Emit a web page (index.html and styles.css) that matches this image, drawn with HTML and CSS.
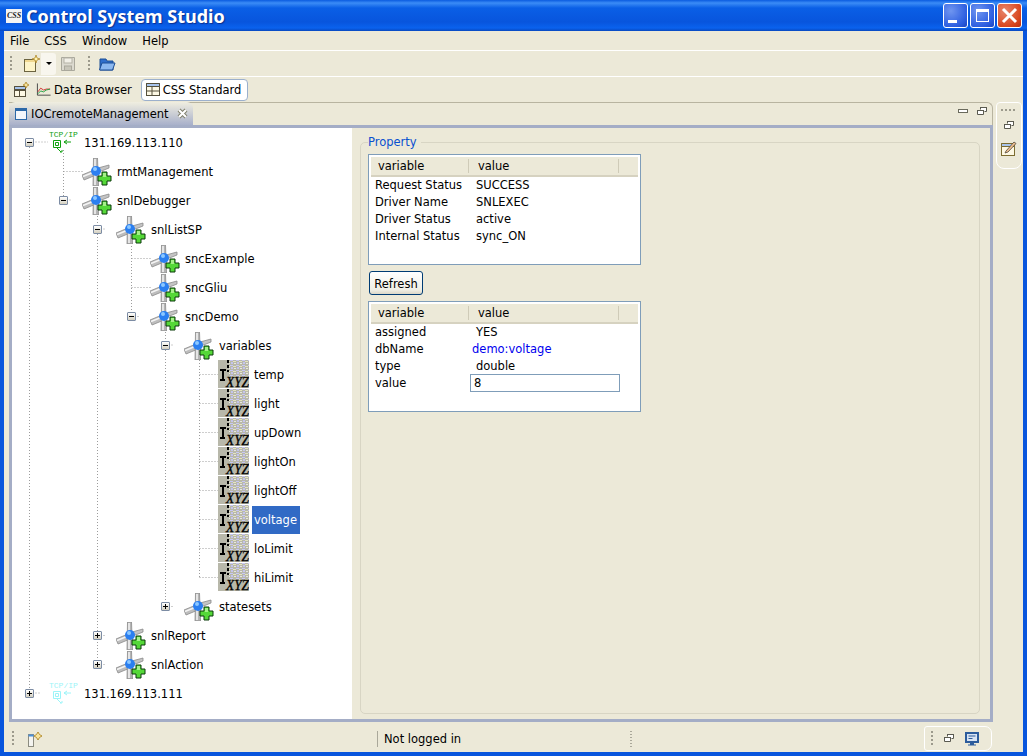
FILE: index.html
```html
<!DOCTYPE html>
<html>
<head>
    <title>Control System Studio</title>
    <link rel="stylesheet" href="styles.css">
</head>
<body>
    <svg class="defs" width="0" height="0">
        <defs>
            <symbol id="gear" viewBox="0 0 32 28">
                <path d="M0 17 L12 12 L14 17 L2 22 z" fill="#bdbdbd" stroke="#8a8a8a" stroke-width=".8"/>
                <path d="M1 18.500 L12 14" stroke="#f4f4f4" stroke-width="1.500"/>
                <path d="M16 10 L27 7 L27 10 L17 14 z" fill="#c4c4c4" stroke="#8a8a8a" stroke-width=".8"/>
                <path d="M11.500 0 H15.500 L16.500 28 H11 z" fill="#b4b4b4" stroke="#8a8a8a" stroke-width=".8"/>
                <path d="M13 1 V27" stroke="#f6f6f6" stroke-width="1.500"/>
                <circle cx="14" cy="13" r="5" fill="#2b7ff0"/>
                <circle cx="13" cy="11" r="2" fill="#8cc8ff"/>
                <path d="M20 14 h5 v4 h4 v5 h-4 v4 h-5 v-4 h-4 v-5 h4 z" fill="#55d838" stroke="#0a3a0a" stroke-width="1"/>
                <path d="M21 15 h3 v4 h-3 z" fill="#a6f08a"/>
            </symbol>
            <symbol id="tcp" viewBox="0 0 36 24">
                <text x="1" y="7" class="tcp-text">TCP/IP</text>
                <path d="M5.500 10.500 h7 v7 h-7 z M7.500 12.500 h3 v3 h-3 z" fill="none" stroke="currentColor"/>
                <path d="M9 18 l4 4 M14 20 v2 h-2 M16 12 h7 M16 12 l3 -2 M16 12 l3 2" fill="none" stroke="currentColor"/>
            </symbol>
            <pattern id="noise" width="6" height="5" patternUnits="userSpaceOnUse">
                <rect x="0" y="0" width="3" height="1" fill="#c8c8f4"/>
                <rect x="3" y="1" width="3" height="1" fill="#e4e4c0"/>
                <rect x="1" y="2" width="2" height="2" fill="#c4c4ec"/>
                <rect x="4" y="3" width="2" height="1" fill="#e8e8e0"/>
            </pattern>
            <symbol id="xyz" viewBox="0 0 31 29">
                <rect width="31" height="28" fill="#b8b8aa"/>
                <rect x="11" width="20" height="17" fill="url(#noise)"/>
                <path d="M10 0 v3 M10 5 v3 M10 10 v2 M2 10 h6 M5 10 v10 M2 20 h5" stroke="#000" stroke-width="2" fill="none"/>
                <text x="8" y="27" textLength="23" lengthAdjust="spacingAndGlyphs" class="xyz-text">XYZ</text>
            </symbol>
            <symbol id="restore" viewBox="0 0 10 9">
                <path d="M3.500 2.500 v-2 h6 v4 h-2 M0.500 3.500 h6 v4 h-6 z" fill="#fff" stroke="#5a5a50"/>
                <path d="M0 3.500 h7 M3 .5 h7" stroke="#5a5a50"/>
            </symbol>
            <symbol id="persp" viewBox="0 0 16 16">
                <rect x="1.500" y="4.500" width="11" height="10" fill="#fdf8e4" stroke="#56503c"/>
                <path d="M1.500 8.500 h11 M6.500 4.500 v10" stroke="#56503c"/>
                <path d="M1.500 4.500 h11 v3 h-11 z" fill="#a8c4ec" stroke="#56503c"/>
                <path d="M13 0 l1 2 2 1 -2 1 -1 2 -1 -2 -2 -1 2 -1 z" fill="#f8e49c" stroke="#a87c18" stroke-width=".7"/>
            </symbol>
        </defs>
    </svg>

    <div class="window">
        <div class="titlebar">
            <span class="logo">CSS</span>
            <span class="title">Control System Studio</span>
            <div class="winbtns">
                <span class="winbtn"><i class="glyph-min"></i></span>
                <span class="winbtn"><i class="glyph-max"></i></span>
                <span class="winbtn close">
                    <svg width="19" height="19" viewBox="0 0 19 19"><path d="M3 3 L16 16 M16 3 L3 16" stroke="#fff" stroke-width="3"/></svg>
                </span>
            </div>
        </div>

        <div class="menubar">
            <span>File</span><span>CSS</span><span>Window</span><span>Help</span>
        </div>

        <div class="toolbar">
            <span class="grip"></span>
            <svg class="tool-new" width="18" height="18" viewBox="0 0 18 18">
                <rect x="1.500" y="4.500" width="11" height="12" fill="#fdf4c8" stroke="#6c6440"/>
                <path d="M2 5 h10 v2 h-10 z" fill="#f0d890"/>
                <path d="M13 0 l1 3 3 1 -3 1 -1 3 -1 -3 -3 -1 3 -1 z" fill="#fff4b0" stroke="#a87c18" stroke-width=".7"/>
            </svg>
            <span class="dropdown"><i></i></span>
            <svg class="tool-save" width="16" height="16" viewBox="0 0 16 16">
                <path d="M1.500 1.500 h13 v13 h-13 z" fill="#dcdad0" stroke="#aaa89c"/>
                <rect x="4" y="2" width="8" height="5" fill="#f2f0e8" stroke="#b4b2a6"/>
                <rect x="4.500" y="10" width="7" height="4.500" fill="#c8c6ba" stroke="#aaa89c"/>
            </svg>
            <span class="grip second"></span>
            <svg width="17" height="14" viewBox="0 0 17 14">
                <path d="M1 2 h6 l1 2 h6 v9 h-13 z" fill="#2f6ecb" stroke="#1d4e96"/>
                <path d="M3 6 h13 l-2.500 7 h-13 z" fill="#8cb8f0" stroke="#1d4e96"/>
            </svg>
        </div>

        <div class="perspbar">
            <svg class="persp-open" width="16" height="16"><use href="#persp"/></svg>
            <span class="persp-btn">
                <svg width="15" height="14" viewBox="0 0 16 14">
                    <path d="M1.500 0 v12.500 h14" fill="none" stroke="#444"/>
                    <path d="M2 9 l3 -4 3 2 3 -1 4 0" fill="none" stroke="#d03030"/>
                    <path d="M2 11 l3 -3 3 1 3 -2 4 -1" fill="none" stroke="#20a040"/>
                </svg>
                Data Browser
            </span>
            <span class="persp-btn active">
                <svg width="14" height="13" viewBox="0 0 14 13">
                    <rect x=".5" y=".5" width="13" height="12" fill="#fdf8e4" stroke="#56503c"/>
                    <path d="M.5 .5 h13 v3 h-13 z" fill="#a8c4ec" stroke="#56503c"/>
                    <path d="M.5 8 h13 M6 3.500 v9" stroke="#56503c"/>
                </svg>
                CSS Standard
            </span>
        </div>

        <div class="workarea">
            <div class="folder">
                <div class="tabrow">
                    <div class="tab">
                        <span class="tab-icon"></span>
                        <span>IOCremoteManagement</span>
                        <svg class="tab-close" width="11" height="11" viewBox="0 0 11 11"><path d="M2 2 L9 9 M9 2 L2 9" stroke="#80806c" stroke-width="4"/><path d="M2 2 L9 9 M9 2 L2 9" stroke="#fff" stroke-width="2"/></svg>
                    </div>
                    <div class="view-tools">
                        <span class="mini-min"></span>
                        <svg width="10" height="9"><use href="#restore"/></svg>
                    </div>
                </div>
                <div class="frame">
                    <div class="tree">
                        <svg class="tree-lines" width="340" height="591">
                            <path d="M17.500 14 H36 M17.500 19 V560 M17.500 565 H28 M51.500 22 V68 M51.500 43.500 H72 M51.500 72 H60 M85.500 82 V532 M85.500 101 H94 M85.500 507.500 H94 M85.500 536.500 H94 M119.500 112 V184 M119.500 130.500 H140 M119.500 159.500 H140 M119.500 188.500 H128 M153.500 198 V474 M153.500 217 H162 M153.500 478.500 H162 M187.500 226 V449.500 M187.500 246.500 H206 M187.500 275.500 H206 M187.500 304.500 H206 M187.500 333.500 H206 M187.500 362.500 H206 M187.500 391.500 H206 M187.500 420.500 H206 M187.500 449.500 H206"/>
                        </svg>
                        <div class="row lv0"><span class="toggle minus"></span><svg class="ic-tcp" width="36" height="24"><use href="#tcp"/></svg><span class="label ip">131.169.113.110</span></div>
                        <div class="row lv1"><span class="toggle none"></span><svg class="ic-gear" width="32" height="28"><use href="#gear"/></svg><span class="label">rmtManagement</span></div>
                        <div class="row lv1"><span class="toggle minus"></span><svg class="ic-gear" width="32" height="28"><use href="#gear"/></svg><span class="label">snlDebugger</span></div>
                        <div class="row lv2"><span class="toggle minus"></span><svg class="ic-gear" width="32" height="28"><use href="#gear"/></svg><span class="label">snlListSP</span></div>
                        <div class="row lv3"><span class="toggle none"></span><svg class="ic-gear" width="32" height="28"><use href="#gear"/></svg><span class="label">sncExample</span></div>
                        <div class="row lv3"><span class="toggle none"></span><svg class="ic-gear" width="32" height="28"><use href="#gear"/></svg><span class="label">sncGliu</span></div>
                        <div class="row lv3"><span class="toggle minus"></span><svg class="ic-gear" width="32" height="28"><use href="#gear"/></svg><span class="label">sncDemo</span></div>
                        <div class="row lv4"><span class="toggle minus"></span><svg class="ic-gear" width="32" height="28"><use href="#gear"/></svg><span class="label">variables</span></div>
                        <div class="row lv5"><svg class="ic-xyz" width="31" height="29"><use href="#xyz"/></svg><span class="label">temp</span></div>
                        <div class="row lv5"><svg class="ic-xyz" width="31" height="29"><use href="#xyz"/></svg><span class="label">light</span></div>
                        <div class="row lv5"><svg class="ic-xyz" width="31" height="29"><use href="#xyz"/></svg><span class="label">upDown</span></div>
                        <div class="row lv5"><svg class="ic-xyz" width="31" height="29"><use href="#xyz"/></svg><span class="label">lightOn</span></div>
                        <div class="row lv5"><svg class="ic-xyz" width="31" height="29"><use href="#xyz"/></svg><span class="label">lightOff</span></div>
                        <div class="row lv5"><svg class="ic-xyz" width="31" height="29"><use href="#xyz"/></svg><span class="label selected">voltage</span></div>
                        <div class="row lv5"><svg class="ic-xyz" width="31" height="29"><use href="#xyz"/></svg><span class="label">loLimit</span></div>
                        <div class="row lv5"><svg class="ic-xyz" width="31" height="29"><use href="#xyz"/></svg><span class="label">hiLimit</span></div>
                        <div class="row lv4"><span class="toggle plus"></span><svg class="ic-gear" width="32" height="28"><use href="#gear"/></svg><span class="label">statesets</span></div>
                        <div class="row lv2"><span class="toggle plus"></span><svg class="ic-gear" width="32" height="28"><use href="#gear"/></svg><span class="label">snlReport</span></div>
                        <div class="row lv2"><span class="toggle plus"></span><svg class="ic-gear" width="32" height="28"><use href="#gear"/></svg><span class="label">snlAction</span></div>
                        <div class="row lv0"><span class="toggle plus"></span><svg class="ic-tcp faded" width="36" height="24"><use href="#tcp"/></svg><span class="label ip">131.169.113.111</span></div>
                    </div>
                    <div class="details">
                        <fieldset class="property">
                            <legend>Property</legend>
                            <div class="grid-box">
                                <div class="grid-head"><span class="col1">variable</span><span class="col2">value</span></div>
                                <div class="grid-row"><span class="name">Request Status</span><span>SUCCESS</span></div>
                                <div class="grid-row"><span class="name">Driver Name</span><span>SNLEXEC</span></div>
                                <div class="grid-row"><span class="name">Driver Status</span><span>active</span></div>
                                <div class="grid-row"><span class="name">Internal Status</span><span>sync_ON</span></div>
                            </div>
                            <button class="refresh">Refresh</button>
                            <div class="grid-box">
                                <div class="grid-head"><span class="col1">variable</span><span class="col2">value</span></div>
                                <div class="grid-row"><span class="name">assigned</span><span>YES</span></div>
                                <div class="grid-row"><span class="name">dbName</span><span class="link">demo:voltage</span></div>
                                <div class="grid-row"><span class="name">type</span><span>double</span></div>
                                <div class="grid-row"><span class="name">value</span><input class="value-input" type="text" value="8"></div>
                            </div>
                        </fieldset>
                    </div>
                </div>
            </div>
            <div class="trim">
                <span class="trim-grip"></span>
                <svg width="10" height="9"><use href="#restore"/></svg>
                <svg width="16" height="16" viewBox="0 0 16 16">
                    <rect x=".5" y="3.500" width="13" height="12" fill="#fdf8e4" stroke="#7c6c30"/>
                    <path d="M.5 3.500 h13 v3 h-13 z" fill="#a8c4ec" stroke="#7c6c30"/>
                    <path d="M5 11 L13 2 L15 3.500 L7 12 L4 13 z" fill="#f0c090" stroke="#50483c" stroke-width=".8"/>
                </svg>
            </div>
        </div>

        <div class="statusbar">
            <span class="grip status-grip"></span>
            <svg class="fastview" width="16" height="16" viewBox="0 0 16 16">
                <rect x="1.500" y="3.500" width="5" height="12" fill="#f4f4f0" stroke="#8c8c80"/>
                <rect x="1.500" y="3.500" width="5" height="2" fill="#4a90d8"/>
                <path d="M11 1 l1.500 2.500 2.500 1.500 -2.500 1.500 -1.500 2.500 -1.500 -2.500 -2.500 -1.500 2.500 -1.500 z" fill="#f8e49c" stroke="#a87c18" stroke-width=".8"/>
            </svg>
            <span class="sep first"></span>
            <span class="login">Not logged in</span>
            <span class="sep second"></span>
            <div class="status-trim">
                <span class="trim-dots"></span>
                <svg width="10" height="9"><use href="#restore"/></svg>
                <svg width="14" height="14" viewBox="0 0 14 14">
                    <rect x="1" y="1" width="12" height="9" fill="#d8e4f4" stroke="#2c5c9c" stroke-width="2"/>
                    <path d="M3.500 4 h7 M3.500 6.500 h4" stroke="#2c5c9c"/>
                    <path d="M5 11 h4 v1.500 h2 v1 h-8 v-1 h2 z" fill="#2c5c9c"/>
                </svg>
            </div>
        </div>
    </div>
</body>
</html>
```

FILE: styles.css
```css
* { box-sizing: border-box; }
body { margin: 0; font-family: "DejaVu Sans", sans-serif; font-size: 11.5px; color: #000; overflow: hidden; }
.defs { position: absolute; }
.tcp-text { font-family: "Liberation Mono", monospace; font-size: 8px; fill: currentColor; }
.xyz-text { font-family: "Liberation Serif", serif; font-style: italic; font-size: 14px; fill: #000; stroke: #000; stroke-width: .3px; }

.window { width: 1027px; height: 756px; display: flex; flex-direction: column; background: #ece9d8; border: solid #0855dd; border-width: 0 4px 4px; }

/* title bar */
.titlebar { height: 31px; margin: 0 -4px; padding-left: 6px; display: flex; align-items: center; background: linear-gradient(#0a5be0 0, #3b8cf6 3px, #0a5fe6 8px, #0855dd 22px, #0a62ee 28px, #0848c0 31px); color: #fff; }
.logo { width: 16px; height: 14px; margin-right: 4px; background: #f4f4f4; color: #222; font: bold italic 8px/14px "Liberation Serif", serif; text-align: center; overflow: hidden; }
.title { font: bold 18px "Noto Sans", sans-serif; text-shadow: 1px 1px 1px #0b2f90; }
.winbtns { margin-left: auto; margin-right: 5px; display: flex; gap: 2px; }
.winbtn { width: 25px; height: 25px; border: 1px solid #fff; border-radius: 3px; background: radial-gradient(circle at 30% 30%, #6f95f0, #2d5ee0 70%, #1c44c0); display: flex; align-items: center; justify-content: center; }
.winbtn.close { background: radial-gradient(circle at 30% 30%, #e8866c, #d8461e 70%, #b83010); }
.glyph-min { width: 9px; height: 3px; background: #fff; margin: 12px 6px 0 0; }
.glyph-max { width: 13px; height: 13px; border: 1px solid #fff; border-top-width: 3px; }

/* bars */
.menubar { height: 20px; padding-left: 6px; display: flex; gap: 15px; align-items: center; border-bottom: 1px solid #fff; }
.toolbar { height: 26px; padding-left: 6px; display: flex; align-items: center; border-bottom: 1px solid #fff; }
.grip { width: 2px; height: 15px; margin-right: 11px; background: repeating-linear-gradient(#9c9a8c 0 2px, transparent 2px 4px); }
.grip.second { margin-left: 12px; margin-right: 9px; }
.dropdown { width: 15px; height: 22px; background: #f8f6ee; border-radius: 0 3px 3px 0; display: flex; align-items: center; justify-content: center; margin-right: 4px; }
.dropdown i { border: solid transparent; border-width: 3px 3px 0; border-top-color: #000; }
.perspbar { height: 25px; padding-left: 9px; display: flex; align-items: center; }
.persp-open { margin-right: 7px; }
.persp-btn { height: 22px; padding: 0 6px 0 0; display: flex; align-items: center; gap: 3px; }
.persp-btn.active { margin-left: 3px; padding: 0 6px 0 4px; background: #fff; border: 1px solid #9cb0cc; border-radius: 4px; }

/* view folder */
.workarea { flex: 1; display: flex; padding: 0 1px 3px 5px; gap: 3px; min-height: 0; }
.folder { width: 984px; flex: none; display: flex; flex-direction: column; }
.tabrow { height: 23px; display: flex; border-top: 1px solid #b8b4a0; border-right: 1px solid #b8b4a0; border-radius: 0 6px 0 0; }
.tab { width: 184px; margin-top: -1px; padding-left: 6px; display: flex; align-items: center; gap: 4px; background: linear-gradient(#f0eee0, #a8b0ca); border-radius: 6px 6px 0 0; }
.tab-icon { width: 12px; height: 12px; border: 1px solid #2c68a8; border-top-width: 3px; background: #f4f6fb; }
.tab-close { margin-left: 4px; }
.view-tools { margin-left: auto; margin-right: 5px; display: flex; align-items: center; gap: 9px; padding-bottom: 6px; }
.mini-min { width: 10px; height: 4px; background: #fff; border: 1px solid #6a6a5c; }
.frame { flex: 1; display: flex; border: 3px solid #a4adc6; min-height: 0; }

/* tree */
.tree { width: 340px; background: #fff; position: relative; }
.tree-lines { position: absolute; left: 0; top: 0; }
.tree-lines path { fill: none; stroke: #9c9c9c; stroke-dasharray: 1 2; }
.row { height: 29px; display: flex; align-items: center; position: relative; }
.lv0 { padding-left: 13px; }
.lv1 { padding-left: 47px; }
.lv2 { padding-left: 81px; }
.lv3 { padding-left: 115px; }
.lv4 { padding-left: 149px; }
.lv5 { padding-left: 206px; }
.toggle { width: 9px; height: 9px; flex: none; margin-right: 14px; border: 1px solid #7c8ca4; border-radius: 1px; background: linear-gradient(#fff, #d4d0c0); position: relative; }
.toggle.none { visibility: hidden; }
.toggle.minus::before, .toggle.plus::before { content: ""; position: absolute; left: 1px; top: 3px; width: 5px; height: 1px; background: #000; }
.toggle.plus::after { content: ""; position: absolute; left: 3px; top: 1px; width: 1px; height: 5px; background: #000; }
.ic-tcp { flex: none; margin-top: -2px; color: #0fa00f; margin-right: -2px; }
.ic-tcp.faded { color: #9cf4f8; }
.ic-gear { flex: none; margin-right: 1px; }
.ic-xyz { flex: none; margin-right: 3px; }
.label { padding: 0 3px 0 2px; line-height: 28px; height: 28px; }
.label.selected { background: #316ac5; color: #fff; }

/* property panel */
.details { flex: 1; padding: 7px 10px 5px 8px; min-width: 0; }
.property { height: 100%; margin: 0; padding: 0 7px; border: 1px solid #d8d5c4; border-radius: 5px; }
.property legend { padding: 0 4px 0 0; margin-bottom: 5px; color: #0a50d0; }
.grid-box { width: 273px; height: 111px; border: 1px solid #7f9db9; padding: 2px; background: #fff; }
.grid-head { height: 20px; display: flex; align-items: center; background: #ece9d8; border-bottom: 2px solid #d6d2c0; }
.grid-head span { display: block; }
.col1 { width: 98px; padding-left: 7px; border-right: 1px solid #cfcbb8; }
.col2 { width: 150px; padding-left: 9px; border-right: 1px solid #cfcbb8; }
.grid-row { height: 17px; display: flex; align-items: center; padding-left: 4px; }
.grid-row:nth-child(2) { margin-top: -1px; }
.name { width: 101px; flex: none; }
.link { color: #0000ee; margin-left: -4px; }
.refresh { display: block; width: 54px; height: 24px; margin: 6px 0 6px 1px; padding: 1px 0 0; border: 1px solid #003c74; border-radius: 3px; background: linear-gradient(#fff, #f0efe6 80%, #dcd8c8); font: inherit; color: #000; }
.value-input { width: 150px; height: 18px; margin-left: -6px; padding: 1px 3px 0; border: 1px solid #7f9db9; font: inherit; }

/* trim on the right */
.trim { width: 26px; height: 67px; display: flex; flex-direction: column; align-items: center; gap: 10px; padding-top: 6px; border: 1px solid #fff; border-radius: 4px 4px 8px 8px; }
.trim-grip { width: 16px; height: 2px; background: repeating-linear-gradient(90deg, #9c9a8c 0 2px, transparent 2px 4px); }

/* status bar */
.statusbar { height: 27px; padding-left: 8px; display: flex; align-items: center; }
.status-grip { margin-right: 13px; }
.sep { width: 2px; height: 16px; background: repeating-linear-gradient(#aaa89a 0 1px, transparent 1px 3px); }
.sep.first { margin-left: 334px; border-left: 1px solid #aaa89a; background: none; }
.login { margin-left: 5px; width: 246px; }
.status-trim { margin-left: auto; margin-right: 31px; width: 68px; height: 25px; display: flex; align-items: center; gap: 11px; padding-left: 6px; border: 1px solid #fff; border-radius: 3px 7px 7px 3px; }
.trim-dots { width: 2px; height: 15px; background: repeating-linear-gradient(#9c9a8c 0 2px, transparent 2px 4px); }
```
